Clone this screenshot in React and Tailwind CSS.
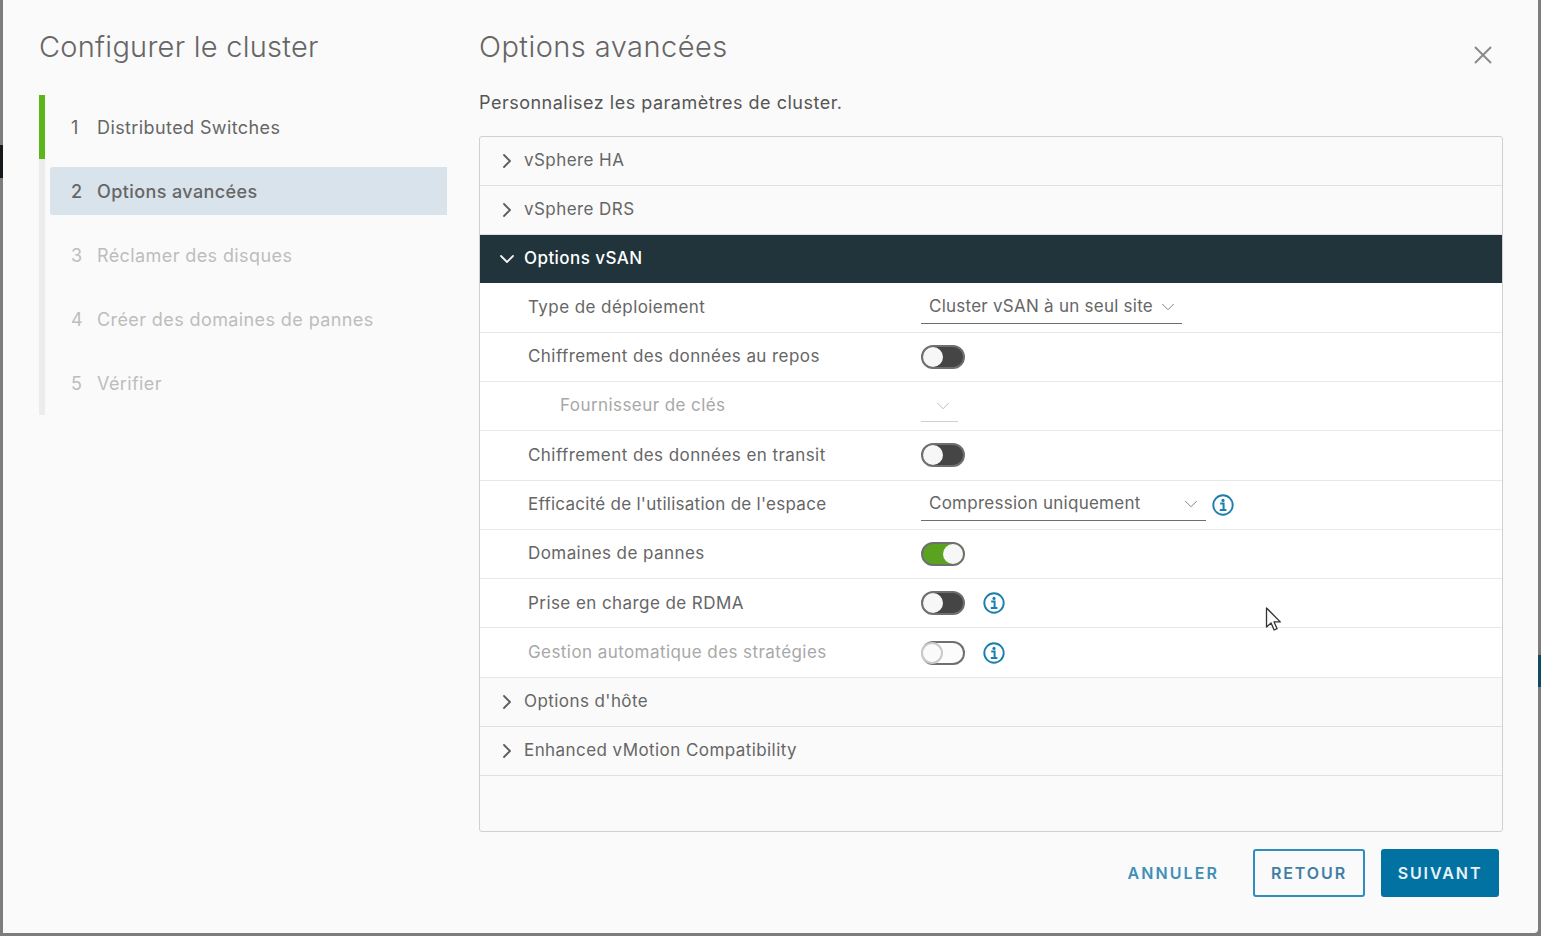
import { ChevronRight, ChevronDown, X } from 'lucide-react'

const steps = [
  { n: 1, label: 'Distributed Switches', state: 'done' },
  { n: 2, label: 'Options avancées', state: 'active' },
  { n: 3, label: 'Réclamer des disques', state: 'todo' },
  { n: 4, label: 'Créer des domaines de pannes', state: 'todo' },
  { n: 5, label: 'Vérifier', state: 'todo' },
]

function InfoIcon() {
  return (
    <svg width="22" height="22" viewBox="0 0 22 22" fill="none" className="shrink-0">
      <circle cx="11" cy="11" r="9.7" stroke="#1b7fae" strokeWidth="1.9" />
      <circle cx="11" cy="6.4" r="1.6" fill="#1b7fae" />
      <path d="M8.2 9.6h3.4v6M7.8 16h6.6" stroke="#1b7fae" strokeWidth="2" />
    </svg>
  )
}

function Toggle({ on, disabled }) {
  if (disabled) {
    return (
      <div className="w-[44px] h-[24px] rounded-full border-2 border-[#6f6f6f] border-l-[#c9c9c9] bg-[#fcfcfc] shrink-0">
        <div className="w-[22px] h-[22px] -ml-[2px] -mt-[1px] rounded-full bg-[#fafafa] border-2 border-[#c9c9c9]"></div>
      </div>
    )
  }
  return (
    <div className={`w-[44px] h-[24px] rounded-full border-2 border-[#6f6f6f] flex items-center shrink-0 ${on ? 'bg-[#5aa220] justify-end' : 'bg-[#454545] justify-start'}`}>
      <div className="w-[20px] h-[20px] rounded-full bg-[#f7f7f7]"></div>
    </div>
  )
}

function Select({ label, width, disabled, chevronClass }) {
  return (
    <div
      className={`h-[32px] flex items-center pl-[8px] border-b-[1.5px] tracking-[0.25px] ${disabled ? 'border-[#cfcfcf] text-[#bcbcbc]' : 'border-[#6e6e6e] text-[#666666]'} ${width}`}
    >
      <span className="whitespace-nowrap">{label}</span>
      <ChevronDown size={22} strokeWidth={1} className={`shrink-0 ${disabled ? 'text-[#b5b5b5]' : 'text-[#777777]'} ${chevronClass}`} />
    </div>
  )
}

function SectionHeader({ label, open }) {
  if (open) {
    return (
      <div className="h-[48.4px] bg-[#21333b] flex items-center pl-[15px] text-white font-medium">
        <ChevronDown size={24} strokeWidth={1.8} className="text-[#f2f2f2] mr-[5px]" />
        {label}
      </div>
    )
  }
  return (
    <div className="h-[49px] border-b border-[#e0e0e0] flex items-center pl-[15px] text-[#666666]">
      <ChevronRight size={24} strokeWidth={1.8} className="text-[#5c5c5c] mr-[5px]" />
      {label}
    </div>
  )
}

function Row({ label, sub, muted, labelClass, children }) {
  return (
    <div className="h-[49.3px] border-b border-[#e8e8e8] bg-[#ffffff] flex items-center">
      <div className={`w-[441px] shrink-0 ${sub ? 'pl-[80px]' : 'pl-[48px]'} ${muted ? 'text-[#a8a8a8]' : 'text-[#666666]'} ${labelClass || ''}`}>{label}</div>
      <div className="flex items-center">{children}</div>
    </div>
  )
}

export default function App() {
  return (
    <div className="h-[936px] overflow-hidden bg-[#7d7d7d] flex relative font-['Inter','Liberation_Sans',sans-serif] text-[17px] tracking-[0.43px]">
      {/* bits of the page behind the dialog */}
      <div className="w-[3px] shrink-0">
        <div className="h-[145px]"></div>
        <div className="h-[33px] bg-[#15191c]"></div>
      </div>

      <div className="flex-1 h-[933px] bg-[#fafafa] rounded-br-[4px] flex min-w-0">
        {/* wizard steps */}
        <div className="w-[476px] shrink-0 pl-[36px] pr-[32px] pt-[28px]">
          <h2 className="text-[29px] font-light leading-[38px] tracking-[0.25px] text-[#666666] whitespace-nowrap">Configurer le cluster</h2>
          <div className="mt-[29px] border-l-[6px] border-[#ececec] relative text-[18px] tracking-[0.4px]">
            <div className="absolute -left-[6px] top-0 w-[6px] h-[64px] bg-[#5ab61a]"></div>
            {steps.map((s) => (
              <div key={s.n} className="h-[64px] flex items-center pl-[5px]">
                <div
                  className={`w-full h-[48px] flex items-center pt-[1px] rounded-l-[3px] ${s.state === 'active' ? 'bg-[#d8e3eb] font-medium' : ''} ${s.state === 'todo' ? 'text-[#bdbdbd]' : 'text-[#666666]'}`}
                >
                  <span className="w-[47px] pl-[21px] shrink-0">{s.n}</span>
                  <span className="whitespace-nowrap">{s.label}</span>
                </div>
              </div>
            ))}
          </div>
        </div>

        {/* main panel */}
        <div className="flex-1 min-w-0 pr-[35px] pt-[28px] flex flex-col">
          <div className="h-[43px] flex items-start justify-between">
            <h2 className="text-[29px] font-light leading-[38px] tracking-[0.45px] text-[#666666]">Options avancées</h2>
            <X size={30} strokeWidth={1.5} className="text-[#8a8a8a] mt-[12px] mr-[5px]" />
          </div>
          <p className="mt-[20px] leading-[24px] text-[18px] tracking-[0.5px] text-[#555555]">Personnalisez les paramètres de cluster.</p>

          <div className="mt-[21px] h-[696px] border border-[#d0d0d0] rounded-[3px] bg-[#fafafa] overflow-hidden">
            <SectionHeader label="vSphere HA" />
            <SectionHeader label="vSphere DRS" />
            <SectionHeader label="Options vSAN" open />
            <Row label="Type de déploiement">
              <Select label="Cluster vSAN à un seul site" width="w-[261px]" chevronClass="ml-[4px]" />
            </Row>
            <Row label="Chiffrement des données au repos">
              <Toggle />
            </Row>
            <Row label="Fournisseur de clés" sub muted>
              <Select label="" width="w-[37px]" disabled chevronClass="ml-[3px]" />
            </Row>
            <Row label="Chiffrement des données en transit">
              <Toggle />
            </Row>
            <Row label="Efficacité de l'utilisation de l'espace" labelClass="tracking-[0.27px]">
              <Select label="Compression uniquement" width="w-[285px]" chevronClass="ml-auto mr-[4px]" />
              <div className="ml-[6px]">
                <InfoIcon />
              </div>
            </Row>
            <Row label="Domaines de pannes">
              <Toggle on />
            </Row>
            <Row label="Prise en charge de RDMA">
              <Toggle />
              <div className="ml-[18px]">
                <InfoIcon />
              </div>
            </Row>
            <Row label="Gestion automatique des stratégies" muted>
              <Toggle disabled />
              <div className="ml-[18px]">
                <InfoIcon />
              </div>
            </Row>
            <SectionHeader label="Options d'hôte" />
            <SectionHeader label="Enhanced vMotion Compatibility" />
          </div>

          <div className="mt-[17px] flex items-center justify-end pr-[4px] text-[16px] font-semibold tracking-[1.9px]">
            <button className="text-[#3f8fb8] tracking-[2.1px] mr-[34px]">ANNULER</button>
            <button className="h-[48px] w-[112px] border-2 border-[#2f8fbc] rounded-[3px] text-[#3f7fa6] mr-[16px]">RETOUR</button>
            <button className="h-[48px] w-[118px] bg-[#0272a3] rounded-[3px] text-[#e8f2f7]">SUIVANT</button>
          </div>
        </div>
      </div>

      <div className="w-[3px] shrink-0">
        <div className="h-[655px]"></div>
        <div className="h-[32px] bg-[#0f4a5e]"></div>
      </div>

      {/* mouse pointer */}
      <svg width="20" height="28" viewBox="0 0 20 28" className="absolute left-[1265px] top-[607px]">
        <path d="M1.5 1v19l4.6-4 3 7 3-1.3-3-6.8h6.2z" fill="#fbfbfb" stroke="#333333" strokeWidth="1.3" strokeLinejoin="round" />
      </svg>
    </div>
  )
}
